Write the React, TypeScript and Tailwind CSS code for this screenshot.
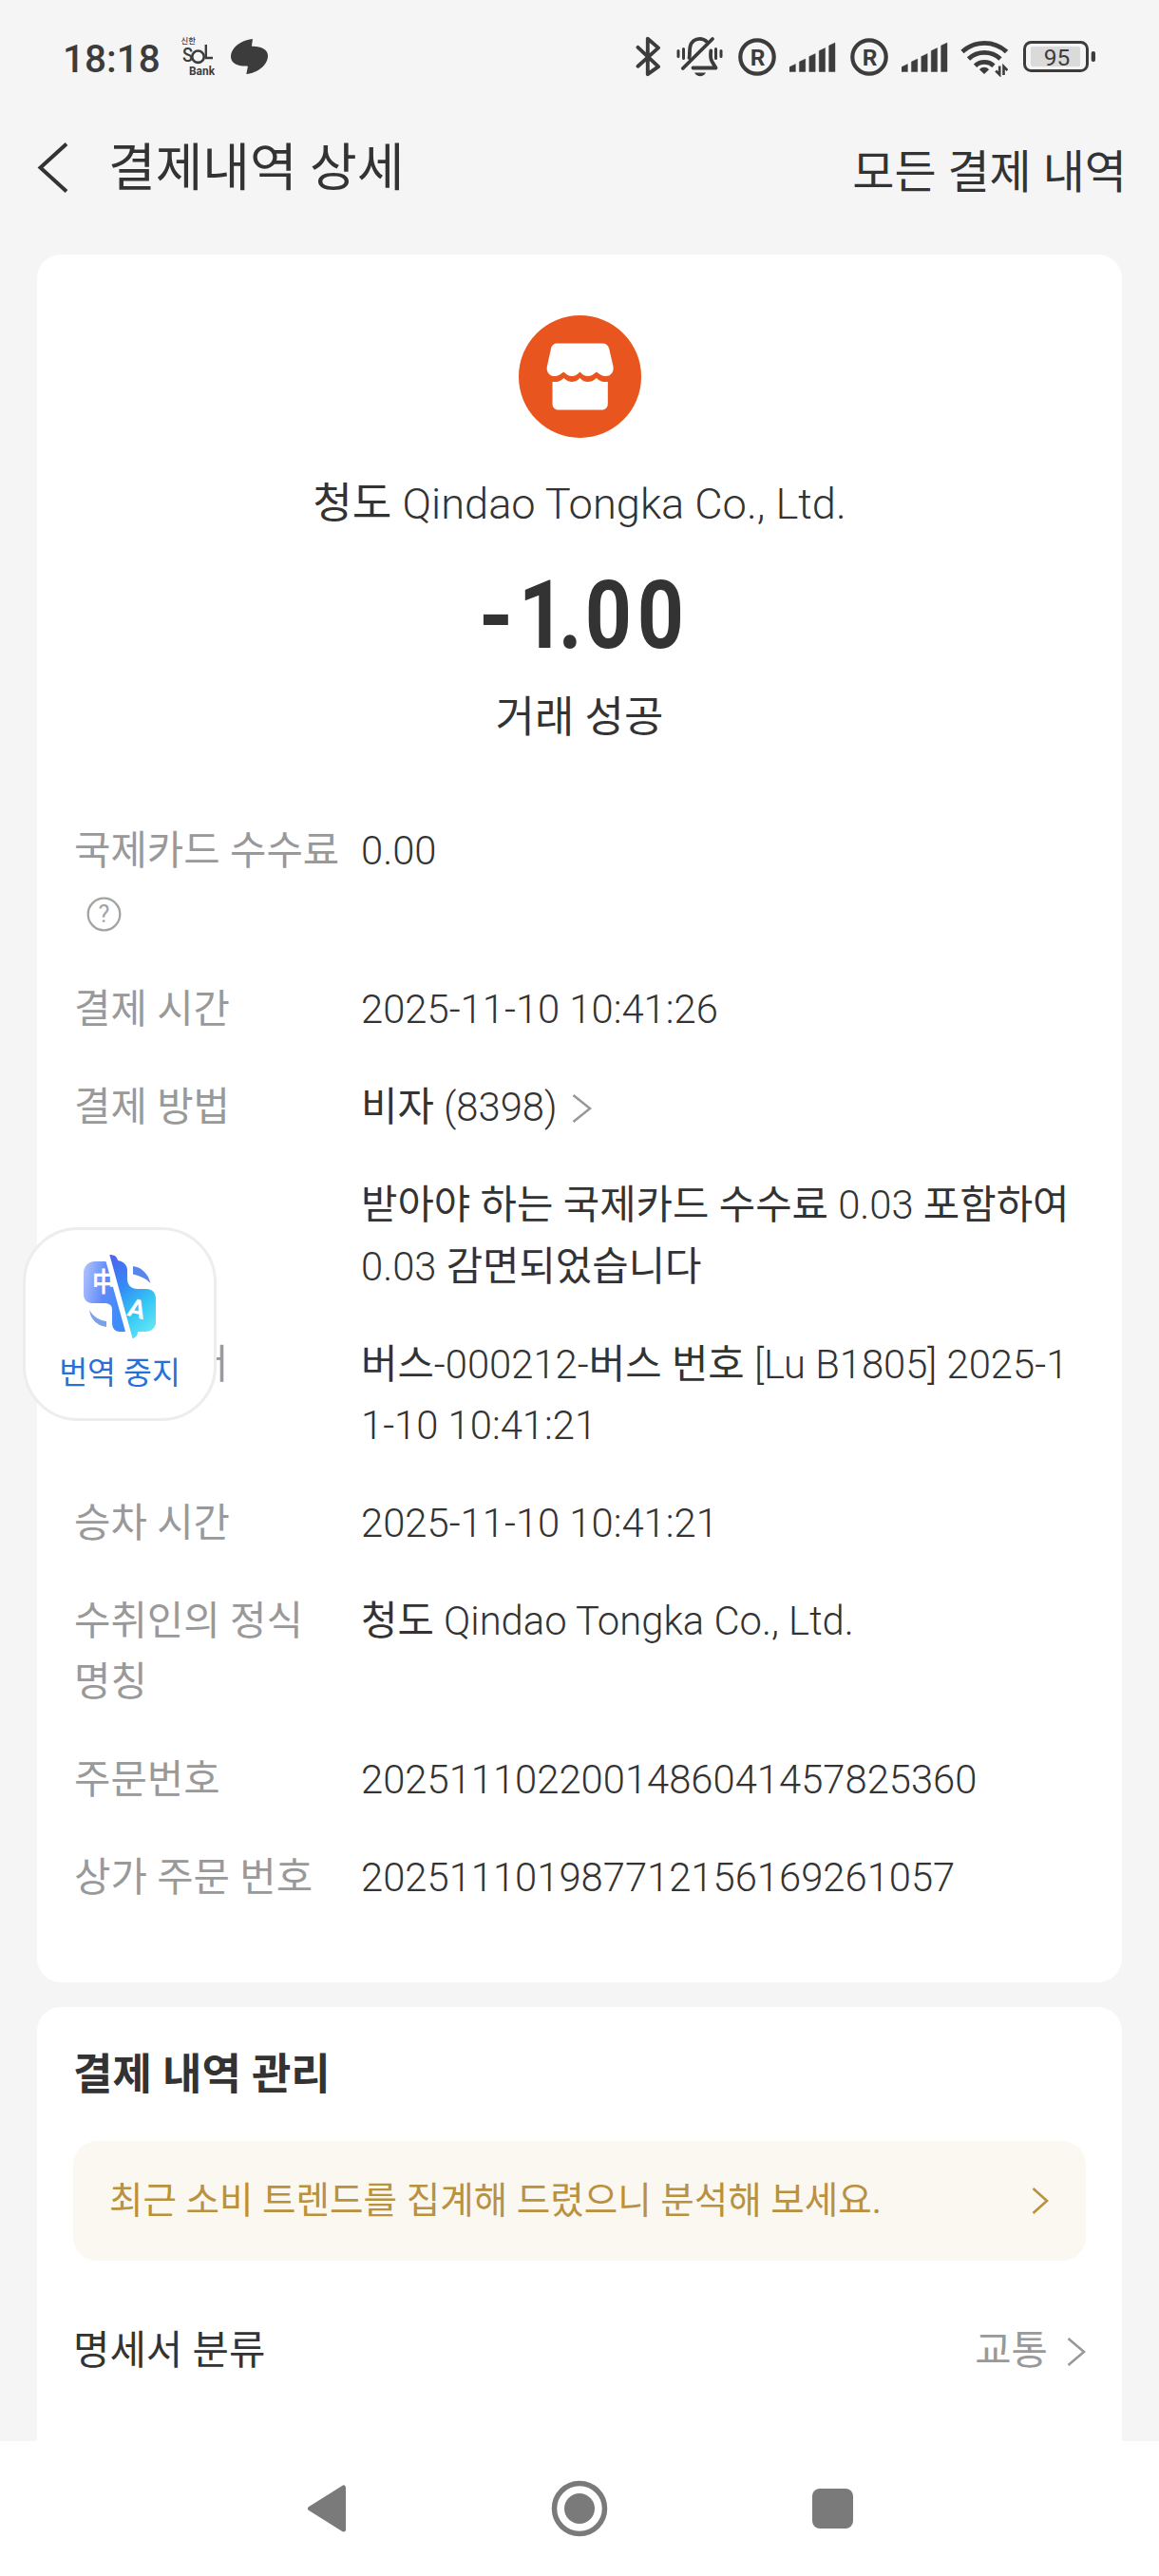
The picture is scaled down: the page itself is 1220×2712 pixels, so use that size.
import type { ReactNode } from "react";

const INK = "#3c3c3c";

function SolBankIcon() {
  return (
    <svg width="36" height="42" viewBox="190 40 36 42" className="ml-[22px]" fill={INK}>
      <g fontFamily="Roboto, 'Noto Sans CJK KR', sans-serif">
        <text x="190.5" y="47.3" fontSize="8" fontWeight="500" textLength="15.5" lengthAdjust="spacingAndGlyphs">신한</text>
        <text x="192" y="66" fontSize="21" fontWeight="500" textLength="11" lengthAdjust="spacingAndGlyphs">S</text>
        <text x="199" y="80" fontSize="12.5" fontWeight="700" textLength="27" lengthAdjust="spacingAndGlyphs">Bank</text>
      </g>
      <circle cx="208.5" cy="60.7" r="6.2" fill="none" stroke={INK} strokeWidth="2.6" />
      <path d="M216.8 48v14h7.2" fill="none" stroke={INK} strokeWidth="2.4" />
    </svg>
  );
}

function SwooshIcon() {
  return (
    <svg width="40" height="38" viewBox="244 42 40 38" className="ml-[17px]">
      <path
        d="M267 42c-12 1-23 9.500-23 18.500 0 7 7 10.500 17 10 1 0 .9.600.7 1.600l-1.400 7c12-1.200 22.700-9.800 22.700-19.300 0-6.500-6.500-9.800-15.700-10-1.300 0-1.400-.400-1.200-1.500Z"
        fill={INK}
      />
    </svg>
  );
}

function BluetoothIcon() {
  return (
    <svg width="28" height="44" viewBox="669 38 28 44" fill="none" stroke={INK} strokeWidth="3.900" strokeLinejoin="round" strokeLinecap="round">
      <path d="M671.500 49.800 693 70.200 681.800 78.200V40.700L693 50.400 671.500 69.800" />
    </svg>
  );
}

function MutedBellIcon() {
  return (
    <svg width="50" height="44" viewBox="711 39 50 44" className="ml-[14px]" fill="none" stroke={INK} strokeWidth="3.800" strokeLinecap="round" strokeLinejoin="round">
      <path d="M718.800 73 750 42" />
      <path d="M725.500 62c.8-3 0-8 1-12 1.200-5 5-8.200 10-8.200 3.500 0 5.500 1 7.500 3" />
      <path d="M748.300 54.500c-.5 4-.5 8 1 11l4.200 7h-24" />
      <path d="M731 77.500h12c-1.500 2.700-3.500 3.700-6 3.700s-4.500-1-6-3.700Z" fill={INK} stroke="none" />
      <g strokeWidth="3">
        <path d="M714 54.500v6M719.500 52.500v10M753.500 52.500v10M759 54.500v6" />
      </g>
    </svg>
  );
}

function RoamingIcon({ className }: { className: string }) {
  return (
    <svg width="40" height="40" viewBox="0 0 40 40" className={className}>
      <circle cx="20" cy="20" r="17.700" fill="none" stroke={INK} strokeWidth="4.200" />
      <text x="20.500" y="28.800" textAnchor="middle" fontFamily="Roboto, sans-serif" fontSize="24.500" fontWeight="700" fill={INK}>R</text>
    </svg>
  );
}

function SignalIcon({ className }: { className: string }) {
  return (
    <svg width="49" height="32" viewBox="0 0 49 32" className={className} fill={INK}>
      {[8, 13.5, 19, 25, 30.5].map((h, i) => (
        <path key={h} d={`M${i * 10.4} 31.500v${-(h - 3)}l6.400-3v${h}Z`} stroke={INK} strokeWidth="0.400" strokeLinejoin="round" />
      ))}
    </svg>
  );
}

function WifiIcon() {
  return (
    <svg width="50" height="40" viewBox="1012 41 50 40" className="ml-[13px] mt-[1px]" fill="none" stroke={INK} strokeWidth="4.800">
      <path d="M1014 54.500a34 34 0 0 1 46.500 0" />
      <path d="M1020.500 62a24.500 24.500 0 0 1 33.500 0" />
      <path d="M1027.500 69.200a14.500 14.500 0 0 1 19.500 0" />
      <path d="M1037 78l-5-4.800c2.800-3.200 7.200-3.200 10 0Z" fill={INK} stroke="none" />
      <g strokeWidth="2.600">
        <path d="M1053.200 69.500v9l-4-4M1057.500 79v-9l4 4" />
      </g>
    </svg>
  );
}

function BatteryIcon() {
  return (
    <svg width="77" height="34" viewBox="1078 43 77 34" className="ml-[16px]">
      <rect x="1079.500" y="44.500" width="66" height="30" rx="7" fill="none" stroke={INK} strokeWidth="3" />
      <rect x="1086" y="49" width="52" height="21" rx="2" fill="#dadada" />
      <rect x="1149.700" y="54" width="4.300" height="11" rx="2" fill={INK} />
      <text x="1113.500" y="69.300" textAnchor="middle" fontFamily="Roboto, sans-serif" fontSize="24.500" fill={INK}>95</text>
    </svg>
  );
}

function StatusBar() {
  return (
    <div className="flex h-[120px] items-center">
      <span className="ml-[66px] w-[102px] pt-[4px] text-[40.500px] leading-[48px] font-medium text-[#3c3c3c]">18:18</span>
      <SolBankIcon />
      <SwooshIcon />
      <div className="mr-[66px] ml-auto flex items-center">
        <BluetoothIcon />
        <MutedBellIcon />
        <RoamingIcon className="ml-[16px]" />
        <SignalIcon className="ml-[14px]" />
        <RoamingIcon className="ml-[15px]" />
        <SignalIcon className="ml-[14px]" />
        <WifiIcon />
        <BatteryIcon />
      </div>
    </div>
  );
}

function Chevron({ w, h, color, className }: { w: number; h: number; color: string; className: string }) {
  return (
    <svg width={w} height={h} viewBox={`0 0 ${w} ${h}`} className={className} fill="none" stroke={color} strokeWidth="2.600">
      <path d={`M1.500 1 ${w - 2} ${h / 2} 1.500 ${h - 1}`} />
    </svg>
  );
}

function StoreIcon() {
  return (
    <svg width="129" height="129" viewBox="0 0 129 129">
      <circle cx="64.500" cy="64.500" r="64.500" fill="#e8551f" />
      <path
        d="M41 29.500h47c4 0 6.300 2 7.200 5.500l4.100 18c1.500 6-2 11-7.500 11-4 0-6.500-1.800-10-4.500-3.500 3-6 4.500-9 4.500s-5.500-1.500-8.300-4.500c-3 3-5.500 4.500-8.500 4.500s-5.500-1.500-8.700-4.500c-3.300 2.700-5.800 4.500-9.800 4.500-5.500 0-9-5-7.500-11l4-18c.8-3.500 3-5.500 7-5.500Z"
        fill="#fff"
      />
      <path
        d="M35.500 70c5 .5 8-.500 12-4 3.500 3 6 4 8.500 4s5.500-1 8.500-4c2.800 3 5.300 4 8.300 4s5.500-1 9-4c4 3.500 7 4.500 12 4v23c0 4-2.500 6.500-6.500 6.500H42c-4 0-6.500-2.500-6.500-6.500Z"
        fill="#fff"
      />
    </svg>
  );
}

function HelpIcon() {
  return (
    <svg width="37" height="37" viewBox="0 0 37 37" className="mt-[3px] ml-[13px]">
      <circle cx="18.500" cy="18.500" r="16.800" fill="none" stroke="#a3a3a3" strokeWidth="2.300" />
      <text x="18.500" y="27.300" textAnchor="middle" fontFamily="Roboto, sans-serif" fontSize="25" fill="#a3a3a3">?</text>
    </svg>
  );
}

function TranslateIcon() {
  return (
    <svg width="78" height="92" viewBox="87 1319 78 92">
      <defs>
        <linearGradient id="tl" x1="0" y1="0" x2="1" y2="0.3">
          <stop offset="0" stopColor="#b4c4fb" />
          <stop offset="0.55" stopColor="#5f8bf9" />
          <stop offset="1" stopColor="#3d8cf8" />
        </linearGradient>
        <linearGradient id="br" x1="0.2" y1="0" x2="0.700" y2="1">
          <stop offset="0" stopColor="#4a66ee" />
          <stop offset="0.350" stopColor="#338cf6" />
          <stop offset="0.700" stopColor="#35c8f5" />
          <stop offset="1" stopColor="#62e4f5" />
        </linearGradient>
      </defs>
      <path d="M100 1328h11.500l20.500 74h-6c-5 0-8-4-8-9v-14c0-5-3-7-8-7H97c-5 0-9-4-9-9v-23c0-7 5-12 12-12Z" fill="url(#tl)" />
      <path d="M115 1321c6 0 8 2 9 6 6 1 10 5 10 10v9c0 7 4 11 11 11h9c6 0 10 4 10 10v25c0 6-5 10-11 10h-8c0 4-2 6-6 7.500l-24.500-88Z" fill="url(#br)" />
      <path d="M140 1333c9 1 16 8 18.500 18-5-5-11-8-18.500-9.500Z" fill="#5a86ea" />
      <path d="M94 1379c4 7 10 11 18 12v6c-9-1-17-8-18-18Z" fill="#78a2ea" />
      <g fontFamily="'Noto Sans CJK KR', sans-serif" fontWeight="700" fill="#fff">
        <text x="97" y="1360" fontSize="28" textLength="24" lengthAdjust="spacingAndGlyphs">中</text>
        <text x="135" y="1387" fontSize="27" fontFamily="Roboto, sans-serif" transform="rotate(14 143 1378)">A</text>
      </g>
      <path d="M113 1320 138 1411" stroke="#fff" strokeWidth="4" />
    </svg>
  );
}

function DetailRow({ label, children }: { label: ReactNode; children: ReactNode }) {
  return (
    <div className="flex leading-[64.5px] whitespace-nowrap">
      <div className="w-[302px] shrink-0 text-[#999999]">{label}</div>
      <div className="font-light">{children}</div>
    </div>
  );
}

function K({ children }: { children: ReactNode }) {
  return <span className="font-normal">{children}</span>;
}

function TranslateBubble() {
  return (
    <div className="absolute top-[1292px] left-[24px] flex h-[204px] w-[204px] flex-col items-center rounded-[58px] border-[3px] border-[#ededed] bg-white pt-[24px]">
      <TranslateIcon />
      <span className="mt-[11px] text-[32.500px] leading-[48px] text-[#2a6fd8]">번역 중지</span>
    </div>
  );
}

export default function App() {
  return (
    <div className="relative h-[2712px] w-[1220px] overflow-hidden bg-[#f5f5f5] font-['Roboto','Noto_Sans_CJK_KR',sans-serif] text-[#333333]">
      <StatusBar />
      <header className="mb-[31px] flex h-[117px] items-center whitespace-nowrap">
        <svg width="34" height="54" viewBox="0 0 34 54" className="mb-[3px] ml-[39px]" fill="none" stroke="#333" strokeWidth="4">
          <path d="M31 1.500 3.500 26.500 31 51.500" />
        </svg>
        <h1 className="mb-[2px] ml-[41px] text-[54px] leading-[64px]">결제내역 상세</h1>
        <span className="mr-[34px] ml-auto pt-[6px] text-[48px] leading-[60px]">모든 결제 내역</span>
      </header>

      <section className="mx-[39px] h-[1818.500px] rounded-[25px] bg-white px-[39px] pt-[64px]">
        <div className="flex flex-col items-center whitespace-nowrap">
          <StoreIcon />
          <p className="mt-[40px] text-[45.200px] leading-[60px] font-light">
            <K>청도</K> Qindao Tongka Co., Ltd.
          </p>
          <p className="mt-[37px] ml-[4px] h-[100px] scale-x-[0.85] text-[101px] leading-[100px] font-bold">
            <span className="relative top-[7px] text-[118px] leading-[0] font-medium tracking-[8px]">-</span>
            <span className="tracking-[-8.700px]">1</span>
            <span className="tracking-[3.800px]">.</span>
            <span className="tracking-[6.600px]">0</span>0
          </p>
          <p className="mt-[28px] text-[45px] leading-[60px]">거래 성공</p>
        </div>

        <div className="mt-[78px] flex flex-col gap-[38.400px] text-[41.750px]">
          <DetailRow
            label={
              <>
                국제카드 수수료
                <div className="flex h-[64.500px] items-center">
                  <HelpIcon />
                </div>
              </>
            }
          >
            0.00
          </DetailRow>
          <DetailRow label="결제 시간">2025-11-10 10:41:26</DetailRow>
          <DetailRow label="결제 방법">
            <div className="flex items-center">
              <span>
                <K>비자</K> (8398)
              </span>
              <Chevron w={21} h={30} color="#999" className="mt-[1px] ml-[15px]" />
            </div>
          </DetailRow>
          <DetailRow label="">
            <K>받아야 하는 국제카드 수수료</K> 0.03 <K>포함하여</K>
            <br />
            0.03 <K>감면되었습니다</K>
          </DetailRow>
          <DetailRow label={<span className="ml-[124px]">서</span>}>
            <K>버스</K>-000212-<K>버스 번호</K> [Lu B1805] 2025-1
            <br />
            1-10 10:41:21
          </DetailRow>
          <DetailRow label="승차 시간">2025-11-10 10:41:21</DetailRow>
          <DetailRow
            label={
              <>
                수취인의 정식
                <br />
                명칭
              </>
            }
          >
            <K>청도</K> Qindao Tongka Co., Ltd.
          </DetailRow>
          <DetailRow label="주문번호">2025111022001486041457825360</DetailRow>
          <DetailRow label="상가 주문 번호">202511101987712156169261057</DetailRow>
        </div>
      </section>

      <section className="mx-[39px] mt-[26.500px] h-[457px] rounded-t-[25px] bg-white px-[38px] pt-[41.500px]">
        <h2 className="text-[45px] leading-[60px] font-bold">결제 내역 관리</h2>
        <div className="mt-[39.500px] flex h-[125.500px] items-center justify-between rounded-[25px] bg-[#fbf8f1] pr-[39px] pl-[38px] text-[38.600px] whitespace-nowrap text-[#b9913f]">
          <span>최근 소비 트렌드를 집계해 드렸으니 분석해 보세요.</span>
          <Chevron w={18} h={28} color="#b9913f" className="mt-[1px]" />
        </div>
        <div className="mt-[65px] flex h-[60px] items-center justify-between text-[41.750px] leading-[60px]">
          <span>명세서 분류</span>
          <span className="flex items-center text-[#999999]">
            교통
            <Chevron w={20} h={30} color="#999" className="mt-[3px] ml-[20px]" />
          </span>
        </div>
      </section>

      <nav className="flex h-[142px] items-center justify-between bg-white pr-[322px] pl-[323px]">
        <svg width="42" height="50" viewBox="0 0 42 50">
          <path d="M38.500 3v44L3.500 25Z" fill="#7a7a7a" stroke="#7a7a7a" strokeWidth="5" strokeLinejoin="round" />
        </svg>
        <svg width="60" height="60" viewBox="0 0 60 60">
          <circle cx="30" cy="30" r="26.500" fill="none" stroke="#7a7a7a" strokeWidth="5.500" />
          <circle cx="30" cy="30" r="16" fill="#7a7a7a" />
        </svg>
        <div className="h-[42px] w-[43px] rounded-[8px] bg-[#7a7a7a]" />
      </nav>

      <TranslateBubble />
    </div>
  );
}
